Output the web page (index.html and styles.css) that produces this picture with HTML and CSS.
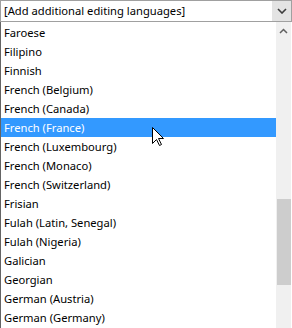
FILE: index.html
```html
<!DOCTYPE html>
<html lang="en">
<head>
    <meta charset="UTF-8">
    <title>Editing languages</title>
    <link rel="stylesheet" href="styles.css">
</head>
<body>
    <div class="combo">
        <span class="combotext">[Add additional editing languages]</span>
        <span class="dropbtn">
            <svg width="10" height="6" viewBox="0 0 10 6"><path d="M1 1 L5 5 L9 1" fill="none" stroke="#3c3c3c" stroke-width="1.6"/></svg>
        </span>
    </div>
    <div class="listbox">
        <ul class="items">
            <li>Faroese</li>
            <li>Filipino</li>
            <li>Finnish</li>
            <li>French (Belgium)</li>
            <li>French (Canada)</li>
            <li class="selected">French (France)</li>
            <li>French (Luxembourg)</li>
            <li>French (Monaco)</li>
            <li>French (Switzerland)</li>
            <li>Frisian</li>
            <li>Fulah (Latin, Senegal)</li>
            <li>Fulah (Nigeria)</li>
            <li>Galician</li>
            <li>Georgian</li>
            <li>German (Austria)</li>
            <li>German (Germany)</li>
        </ul>
        <div class="scrollbar">
            <div class="arrowup">
                <svg width="9" height="6" viewBox="0 0 9 6"><path d="M1 5 L4.5 1.5 L8 5" fill="none" stroke="#606060" stroke-width="1.5"/></svg>
            </div>
            <div class="thumb"></div>
        </div>
        <svg class="pointer" width="13" height="20" viewBox="0 0 13 20"><path d="M0.5 0.5 L0.5 16.5 L4.5 12.5 L7.5 18.5 L9.5 17.5 L6.5 11.5 L11.5 11.5 Z" fill="#fff" stroke="#000" stroke-width="1"/></svg>
    </div>
</body>
</html>
```

FILE: styles.css
```css
body {
    margin: 0;
    width: 292px;
    height: 328px;
    background: #fff;
    font-family: "Noto Sans", "Open Sans", sans-serif;
    font-size: 11.2px;
    color: #000;
    overflow: hidden;
}
.combo {
    height: 20px;
    border: 1px solid #a0a0a0;
    display: flex;
    align-items: center;
    background: #fff;
}
.combotext {
    flex: 1;
    padding-left: 3px;
    line-height: 20px;
}
.dropbtn {
    width: 19px;
    height: 20px;
    background: #e3e3e3;
    display: flex;
    align-items: center;
    justify-content: center;
}
.listbox {
    position: relative;
    display: flex;
    height: 306px;
    border-left: 1px solid #646464;
}
.items {
    list-style: none;
    margin: 0;
    padding: 1px 0 0 0;
    flex: 1;
}
.items li {
    height: 19px;
    line-height: 19px;
    padding-left: 3px;
    white-space: nowrap;
}
.items li.selected {
    background: #3399ff;
    color: #fff;
}
.scrollbar {
    width: 15px;
    background: #f0f0f0;
    margin-right: 1px;
    position: relative;
}
.arrowup {
    height: 17px;
    display: flex;
    align-items: center;
    justify-content: center;
}
.thumb {
    position: absolute;
    left: 1px;
    right: 0;
    top: 177px;
    height: 86px;
    background: #cdcdcd;
}
.pointer {
    position: absolute;
    left: 151px;
    top: 105px;
}
```
